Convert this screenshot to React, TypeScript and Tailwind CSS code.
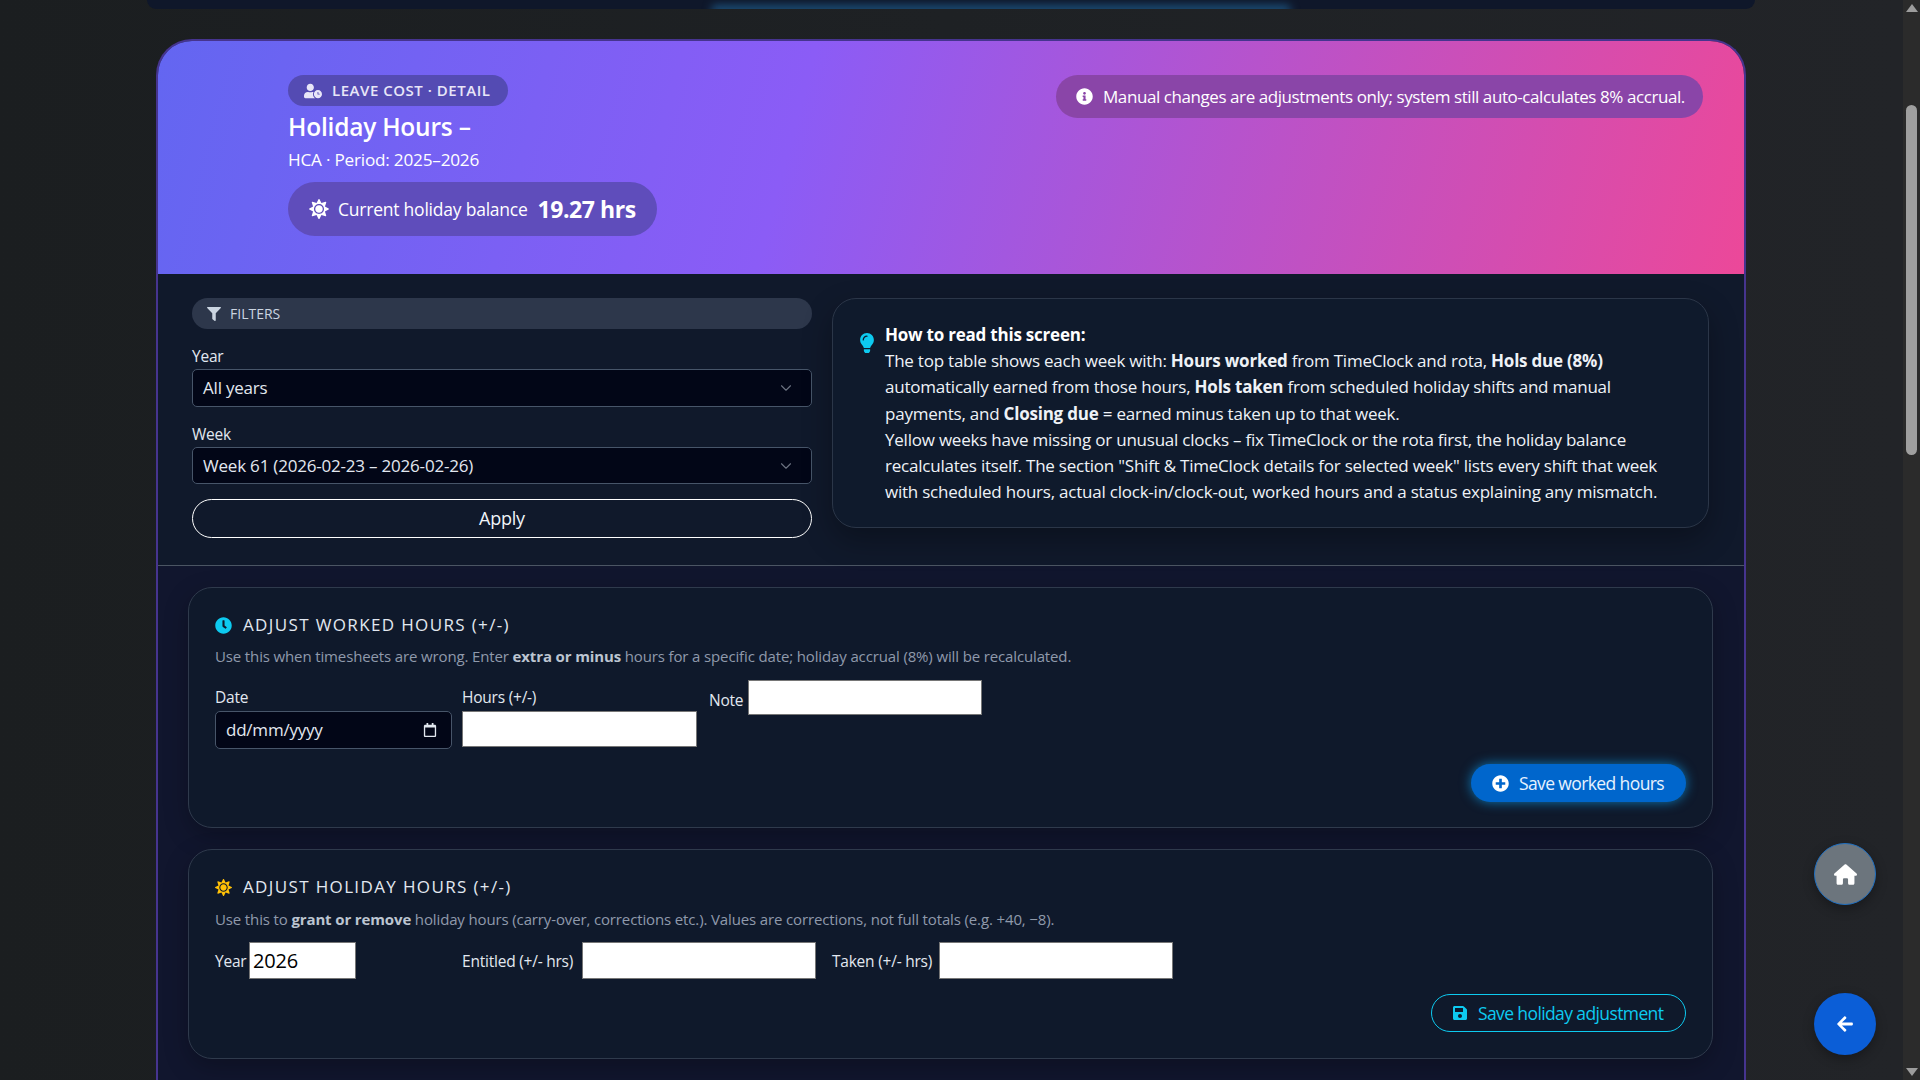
import { FaUserClock, FaInfoCircle, FaSun, FaFilter, FaLightbulb, FaClock, FaPlusCircle, FaSave, FaArrowLeft, FaRegCalendar } from "react-icons/fa";
import { FaHouse } from "react-icons/fa6";
import { ChevronDown } from "lucide-react";

function Select({ value, className }: { value: string; className: string }) {
  return (
    <div className={`flex items-center justify-between rounded-[5px] border border-[#475569] bg-[#020617] pl-[10px] pr-[16px] text-[17px] tracking-[-0.012em] text-[#e2e8f0] ${className}`}>
      <span>{value}</span>
      <ChevronDown size={18} strokeWidth={1.5} className="text-[#6b7280]" />
    </div>
  );
}

function WhiteInput({ className, value }: { className: string; value?: string }) {
  return <input readOnly value={value ?? ""} className={`border border-[#767676] bg-white pl-[3px] text-[20px] text-black outline-none ${className}`} />;
}

export default function App() {
  return (
    <div className="flex h-screen w-full overflow-hidden bg-[#1e2124] text-white [font-family:'Open_Sans',sans-serif] tracking-[-0.014em]">
      <main className="flex min-w-0 flex-1 flex-col items-center overflow-hidden bg-gradient-to-r from-[#1b1e20] via-[#1e2124] to-[#222428] pr-[1px]">
        <div className="relative h-[9px] w-[1608px] shrink-0 overflow-hidden rounded-b-[16px] bg-[#0f172a]">
          <div className="absolute bottom-[-6px] left-[564px] h-[10px] w-[580px] rounded-full bg-[#1c4f78] blur-[4px]" />
        </div>
        <div className="mt-[30px] w-[1590px] shrink-0 overflow-hidden rounded-t-[36px] border-x-2 border-t-2 border-[#46348f] bg-[#0f172a]">
          <header className="flex h-[233px] items-start justify-between bg-[linear-gradient(105deg,#6366f1_0%,#8b5cf6_40%,#ec4899_100%)] pb-0 pl-[130px] pr-[41px] pt-[34px]">
            <div className="flex flex-col items-start">
              <div className="flex h-[31px] w-[220px] items-center gap-[10px] rounded-full bg-[#544bb3] pl-[16px] text-[15px] font-semibold tracking-[0.035em] text-[#e8e6f8]">
                <FaUserClock size={18} />
                <span>LEAVE COST · DETAIL</span>
              </div>
              <div className="mb-[2px] mt-[3px] text-[24.5px] font-semibold leading-[36px]">Holiday Hours –</div>
              <div className="text-[17.2px] leading-[26px]">HCA · Period: 2025–2026</div>
              <div className="mt-[9px] flex h-[54px] w-[369px] items-center rounded-full bg-[#5f4dbb] pl-[21px] text-[17.5px]">
                <FaSun size={20} />
                <span className="ml-[9px]">Current holiday balance</span>
                <span className="ml-[10px] text-[23px] font-bold tracking-[-0.02em]">19.27 hrs</span>
              </div>
            </div>
            <div className="flex h-[43px] w-[647px] items-center gap-[10px] rounded-full bg-[#8a45a8] pl-[20px] text-[17px] tracking-[-0.025em]">
              <FaInfoCircle size={17} />
              <span>Manual changes are adjustments only; system still auto-calculates 8% accrual.</span>
            </div>
          </header>

          <section className="flex h-[292px] gap-[20px] border-b border-[#4b5563] bg-[#10192b] pl-[34px] pr-[35px] pt-[24px]">
            <div className="w-[620px] shrink-0">
              <div className="flex h-[31px] items-center gap-[9px] rounded-full bg-[#2d374b] pl-[15px] text-[14px] tracking-[0em] text-[#cbd5e1]">
                <FaFilter size={14} />
                <span>FILTERS</span>
              </div>
              <div className="mt-[15px] text-[15.5px] leading-[25px] text-[#e2e8f0]">Year</div>
              <Select value="All years" className="h-[38px]" />
              <div className="mt-[15px] text-[15.5px] leading-[25px] text-[#e2e8f0]">Week</div>
              <Select value="Week 61 (2026-02-23 – 2026-02-26)" className="h-[37px]" />
              <div className="mt-[15px] flex h-[39px] items-center justify-center rounded-full border border-white text-[18px] text-[#f1f5f9]">Apply</div>
            </div>
            <div className="flex h-[230px] flex-1 rounded-[24px] border border-[#2b3648] bg-[#0f1a2c] pl-[24px] pr-[40px] pt-[23px] shadow-[0_12px_30px_rgba(0,0,0,0.3)]">
              <FaLightbulb size={20} className="mt-[11px] shrink-0 text-[#0dcaf0]" />
              <div className="ml-[8px] text-[17px] leading-[26.2px] text-[#eef2f7]">
                <div className="font-bold text-white">How to read this screen:</div>
                <div>The top table shows each week with: <b>Hours worked</b> from TimeClock and rota, <b>Hols due (8%)</b> automatically earned from those hours, <b>Hols taken</b> from scheduled holiday shifts and manual payments, and <b>Closing due</b> = earned minus taken up to that week.</div>
                <div>Yellow weeks have missing or unusual clocks – fix TimeClock or the rota first, the holiday balance recalculates itself. The section "Shift &amp; TimeClock details for selected week" lists every shift that week with scheduled hours, actual clock-in/clock-out, worked hours and a status explaining any mismatch.</div>
              </div>
            </div>
          </section>

          <section className="flex flex-col gap-[21px] bg-[#11162e] pl-[30px] pr-[31px] pt-[21px]">
            <div className="flex h-[241px] shrink-0 flex-col rounded-[24px] border border-[#2f3a4c] bg-[#0f192b] pl-[26px] pr-[26px] pt-[25px] shadow-[0_8px_24px_rgba(0,0,0,0.25)]">
              <div className="flex items-center gap-[11px] text-[17px] leading-[24px] tracking-[0.08em] text-[#e2e8f0]">
                <FaClock size={17} className="text-[#0dcaf0]" />
                <span>ADJUST WORKED HOURS (+/-)</span>
              </div>
              <div className="mt-[7px] text-[15px] leading-[24px] tracking-[-0.009em] text-[#8f9aab]">Use this when timesheets are wrong. Enter <b className="text-[#bcc5d1]">extra or minus</b> hours for a specific date; holiday accrual (8%) will be recalculated.</div>
              <div className="mt-[12px] flex items-start">
                <div className="mt-[5px] w-[237px]">
                  <div className="text-[15.5px] leading-[24px] text-[#e2e8f0]">Date</div>
                  <div className="mt-[2px] flex h-[38px] items-center justify-between rounded-[5px] border border-[#475569] bg-[#020617] pl-[10px] pr-[14px] text-[17px] text-[#e2e8f0]">
                    <span>dd/mm/yyyy</span>
                    <FaRegCalendar size={14} />
                  </div>
                </div>
                <div className="ml-[10px] mt-[5px] w-[235px]">
                  <div className="text-[15.5px] leading-[24px] text-[#e2e8f0]">Hours (+/-)</div>
                  <WhiteInput className="mt-[2px] block h-[36px] w-[235px]" />
                </div>
                <div className="ml-[12px] flex items-center gap-[5px]">
                  <span className="pt-[6px] text-[15.5px] text-[#e2e8f0]">Note</span>
                  <WhiteInput className="h-[35px] w-[234px]" />
                </div>
              </div>
              <div className="mt-[15px] flex justify-end">
                <div className="flex h-[38px] w-[215px] items-center gap-[10px] rounded-full bg-[#0066cc] pl-[21px] text-[17.5px] tracking-[-0.035em] text-[#e6f2ff] shadow-[0_0_12px_rgba(13,160,240,0.7)]">
                  <FaPlusCircle size={17} className="text-white" />
                  <span>Save worked hours</span>
                </div>
              </div>
            </div>

            <div className="flex h-[210px] shrink-0 flex-col rounded-[24px] border border-[#2f3a4c] bg-[#0f192b] pl-[26px] pr-[26px] pt-[25px] shadow-[0_8px_24px_rgba(0,0,0,0.25)]">
              <div className="flex items-center gap-[11px] text-[17px] leading-[24px] tracking-[0.08em] text-[#e2e8f0]">
                <FaSun size={17} className="text-[#ffc107]" />
                <span>ADJUST HOLIDAY HOURS (+/-)</span>
              </div>
              <div className="mt-[8px] text-[15px] leading-[24px] tracking-[-0.009em] text-[#8f9aab]">Use this to <b className="text-[#bcc5d1]">grant or remove</b> holiday hours (carry-over, corrections etc.). Values are corrections, not full totals (e.g. +40, −8).</div>
              <div className="mt-[11px] flex items-center text-[15.5px] text-[#e2e8f0]">
                <span className="w-[34px] pt-[2px]">Year</span>
                <WhiteInput value="2026" className="h-[37px] w-[107px]" />
                <span className="ml-[106px] w-[120px] pt-[2px]">Entitled (+/- hrs)</span>
                <WhiteInput className="h-[37px] w-[234px]" />
                <span className="ml-[16px] w-[107px] pt-[2px]">Taken (+/- hrs)</span>
                <WhiteInput className="h-[37px] w-[234px]" />
              </div>
              <div className="mt-[15px] flex justify-end">
                <div className="flex h-[38px] w-[255px] items-center gap-[10px] rounded-full border border-[#0dcaf0] pl-[20px] text-[17.5px] tracking-[-0.035em] text-[#0dcaf0]">
                  <FaSave size={16} />
                  <span>Save holiday adjustment</span>
                </div>
              </div>
            </div>
            <div className="h-[40px] shrink-0 rounded-t-[24px] border border-[#2f3a4c] bg-[#0f192b]" />
          </section>
        </div>
      </main>

      <aside className="flex w-[17px] shrink-0 flex-col items-center bg-[#2b2b2b]">
        <svg width="14" height="17" viewBox="0 0 14 17" className="shrink-0"><path d="M7 4l6 8H1z" fill="#9d9d9d" /></svg>
        <div className="mt-[88px] h-[350px] w-[11px] shrink-0 rounded-full bg-[#9f9f9f]" />
        <div className="flex-1" />
        <svg width="14" height="17" viewBox="0 0 14 17" className="shrink-0"><path d="M7 13L1 5h12z" fill="#9d9d9d" /></svg>
      </aside>

      <div className="fixed left-[1814px] top-[843px] flex h-[62px] w-[62px] items-center justify-center rounded-full border border-[#1f6fc0] bg-[#6c757d] text-white shadow-[0_4px_12px_rgba(0,0,0,0.3)]">
        <FaHouse size={23} />
      </div>
      <div className="fixed left-[1814px] top-[993px] flex h-[62px] w-[62px] items-center justify-center rounded-full bg-[#0b5ed7] text-white shadow-[0_4px_12px_rgba(0,0,0,0.3)]">
        <FaArrowLeft size={18} />
      </div>
    </div>
  );
}
